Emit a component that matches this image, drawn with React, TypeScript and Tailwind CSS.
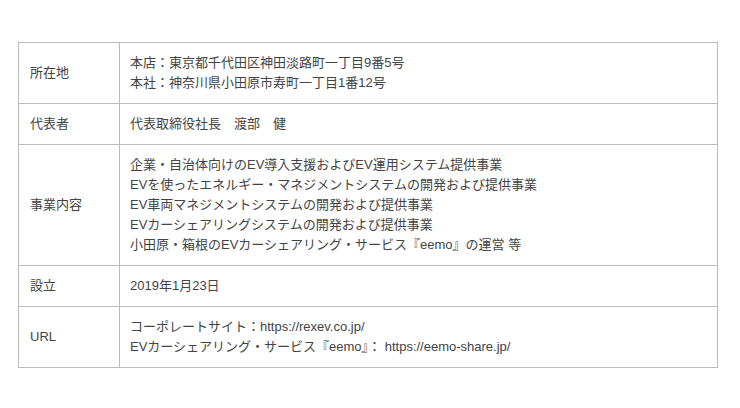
const rows: { label: string; lines: string[] }[] = [
  {
    label: "所在地",
    lines: ["本店：東京都千代田区神田淡路町一丁目9番5号", "本社：神奈川県小田原市寿町一丁目1番12号"],
  },
  { label: "代表者", lines: ["代表取締役社長　渡部　健"] },
  {
    label: "事業内容",
    lines: [
      "企業・自治体向けのEV導入支援およびEV運用システム提供事業",
      "EVを使ったエネルギー・マネジメントシステムの開発および提供事業",
      "EV車両マネジメントシステムの開発および提供事業",
      "EVカーシェアリングシステムの開発および提供事業",
      "小田原・箱根のEVカーシェアリング・サービス『eemo』の運営 等",
    ],
  },
  { label: "設立", lines: ["2019年1月23日"] },
  {
    label: "URL",
    lines: ["コーポレートサイト：https://rexev.co.jp/", "EVカーシェアリング・サービス『eemo』： https://eemo-share.jp/"],
  },
];

export default function App() {
  return (
    <div
      lang="ja"
      className="w-[740px] h-[408px] bg-white pt-[42px] pl-[18px] text-[#444] text-[13px] leading-[20px]"
      style={{ fontFamily: '"Liberation Sans", "Noto Sans CJK JP", sans-serif' }}
    >
      <table className="w-[700px] border-collapse">
        <tbody>
          {rows.map((row) => (
            <tr key={row.label}>
              <td className="w-[101px] border border-[#bbb] pl-[11px] pr-2 py-[10px] align-middle">
                {row.label}
              </td>
              <td className="border border-[#bbb] pl-[10px] pr-2 py-[10px] align-middle">
                {row.lines.map((line) => (
                  <div key={line}>{line}</div>
                ))}
              </td>
            </tr>
          ))}
        </tbody>
      </table>
    </div>
  );
}
